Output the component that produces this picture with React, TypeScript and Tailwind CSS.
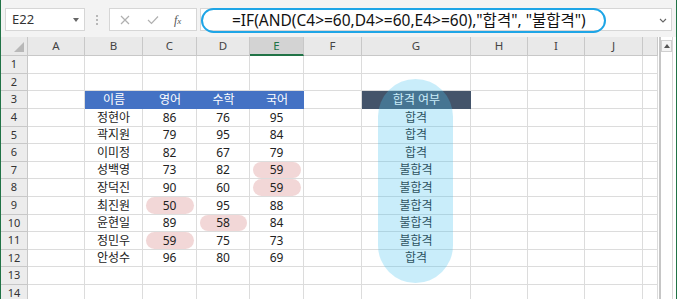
import React from "react";

const cols = [
  { k: "A", w: 57 },
  { k: "B", w: 58 },
  { k: "C", w: 54 },
  { k: "D", w: 53 },
  { k: "E", w: 54 },
  { k: "F", w: 58 },
  { k: "G", w: 109 },
  { k: "H", w: 57 },
  { k: "I", w: 57 },
  { k: "J", w: 58 },
  { k: "", w: 15 },
];

const rowHeights = [18, 17, 18, 18, 17, 18, 17, 18, 18, 17, 18, 17, 18, 18];

type Row = { name: string; c: number; d: number; e: number; pass: boolean; bad: string[] };

const scores: Row[] = [
  { name: "정현아", c: 86, d: 76, e: 95, pass: true, bad: [] },
  { name: "곽지원", c: 79, d: 95, e: 84, pass: true, bad: [] },
  { name: "이미정", c: 82, d: 67, e: 79, pass: true, bad: [] },
  { name: "성백영", c: 73, d: 82, e: 59, pass: false, bad: ["E"] },
  { name: "장덕진", c: 90, d: 60, e: 59, pass: false, bad: ["E"] },
  { name: "최진원", c: 50, d: 95, e: 88, pass: false, bad: ["C"] },
  { name: "윤현일", c: 89, d: 58, e: 84, pass: false, bad: ["D"] },
  { name: "정민우", c: 59, d: 75, e: 73, pass: false, bad: ["C"] },
  { name: "안성수", c: 96, d: 80, e: 69, pass: true, bad: [] },
];

const cellValue = (row: number, col: string) => {
  if (row === 3) {
    const head: Record<string, string> = { B: "이름", C: "영어", D: "수학", E: "국어", G: "합격 여부" };
    return head[col] ?? "";
  }
  const s = scores[row - 4];
  if (!s) return "";
  if (col === "B") return s.name;
  if (col === "C") return String(s.c);
  if (col === "D") return String(s.d);
  if (col === "E") return String(s.e);
  if (col === "G") return s.pass ? "합격" : "불합격";
  return "";
};

const Cell = ({ row, col, w }: { row: number; col: string; w: number }) => {
  const value = cellValue(row, col);
  const s = scores[row - 4];
  const bad = s ? s.bad.includes(col) : false;
  let bg = "bg-white";
  let text = "text-[#222222]";
  if (row === 3 && ["B", "C", "D", "E"].includes(col)) {
    bg = "bg-[#4472c4]";
    text = "text-white";
  }
  if (row === 3 && col === "G") {
    bg = "bg-[#44546a]";
    text = "text-white";
  }
  const colored = bg !== "bg-white";
  return (
    <div
      className={`relative flex h-full shrink-0 items-center justify-center ${bg} ${text} ${
        colored ? "" : "border-r border-b border-[#dcdcdc]"
      }`}
      style={{ width: w }}
    >
      {bad && <div className="absolute top-0 bottom-0 left-[3px] right-[2px] rounded-full bg-[#f2d7d7]" />}
      <span className="relative leading-none">{value}</span>
    </div>
  );
};

const App = () => {
  return (
    <div
      className="relative flex h-[299px] w-[677px] flex-col overflow-hidden border-l border-r border-[#217346] bg-white"
      style={{ fontFamily: '"Noto Sans", "Noto Sans CJK KR", sans-serif' }}
    >
      {/* formula bar */}
      <div className="flex h-[37px] shrink-0 items-start bg-[#f3f3f3] pt-[8px]">
        <div className="ml-[4px] flex h-[23px] w-[80px] items-center justify-between border border-[#d6d6d6] bg-white pl-[6px] pr-[5px]">
          <span className="text-[13px] text-[#333333]">E22</span>
          <span className="h-0 w-0 border-l-[3px] border-r-[3px] border-t-[4px] border-l-transparent border-r-transparent border-t-[#666666]" />
        </div>
        <div className="ml-[11px] mr-[11px] flex h-[23px] flex-col items-center justify-center gap-[2px]">
          <span className="h-[2px] w-[2px] bg-[#b8b8b8]" />
          <span className="h-[2px] w-[2px] bg-[#b8b8b8]" />
          <span className="h-[2px] w-[2px] bg-[#b8b8b8]" />
        </div>
        <div className="flex h-[23px] w-[88px] items-center border border-[#d6d6d6] bg-white text-[#a8a8a8]">
          <svg width="10" height="10" viewBox="0 0 10 10" className="ml-[10px]">
            <path d="M1 1 L9 9 M9 1 L1 9" stroke="#b0b0b0" strokeWidth="1.2" />
          </svg>
          <svg width="12" height="10" viewBox="0 0 12 10" className="ml-[17px]">
            <path d="M1 5 L4.5 8.5 L11 1.5" stroke="#b0b0b0" strokeWidth="1.2" fill="none" />
          </svg>
          <span className="ml-[15px] text-[12px] italic text-[#555555]" style={{ fontFamily: '"Liberation Serif", serif' }}>
            f<span className="text-[9px]">x</span>
          </span>
        </div>
        <div className="relative ml-[3px] flex h-[23px] w-[472px] items-center border border-[#d6d6d6] bg-white">
          <div className="absolute left-[0px] top-[-1px] flex h-[25px] w-[405px] items-center rounded-full border-2 border-[#1ea5e6] pl-[29px]">
            <span className="whitespace-nowrap text-[15.5px] leading-none text-[#111111]">
              =IF(AND(C4&gt;=60,D4&gt;=60,E4&gt;=60),"합격", "불합격")
            </span>
          </div>
          <svg width="8" height="5" viewBox="0 0 8 5" className="absolute right-[4px] top-[9px]">
            <path d="M1 1 L4 4 L7 1" stroke="#666666" strokeWidth="1.1" fill="none" />
          </svg>
        </div>
      </div>

      {/* sheet */}
      <div className="relative flex min-h-0 flex-1">
        <div className="flex w-[658px] shrink-0 flex-col">
          {/* column headers */}
          <div className="flex h-[19px] shrink-0 text-[11.5px] text-[#444444]">
            <div className="relative h-full w-[27px] shrink-0 border-r border-b border-[#c8c8c8] bg-[#e9e9e9]">
              <div className="absolute bottom-[3px] right-[3px] h-0 w-0 border-b-[10px] border-l-[10px] border-b-[#b8b8b8] border-l-transparent" />
            </div>
            {cols.map((c) => (
              <div
                key={c.k + c.w}
                className={`flex h-full shrink-0 items-center justify-center border-r ${
                  c.k === "E"
                    ? "border-b-2 border-r-[#c8c8c8] border-b-[#217346] bg-[#d3d3d3] text-[#217346]"
                    : "border-b border-[#c8c8c8] bg-[#e9e9e9]"
                }`}
                style={{ width: c.w }}
              >
                {c.k}
              </div>
            ))}
          </div>
          {/* rows */}
          {rowHeights.map((h, i) => {
            const row = i + 1;
            return (
              <div key={row} className="flex shrink-0 text-[12px]" style={{ height: h }}>
                <div className="flex h-full w-[27px] shrink-0 items-center justify-center border-r border-b border-[#c8c8c8] bg-[#ececec] text-[11px] text-[#333333]">
                  {row}
                </div>
                {cols.map((c) => (
                  <Cell key={c.k + c.w} row={row} col={c.k} w={c.w} />
                ))}
              </div>
            );
          })}
        </div>
        {/* frame + scrollbar */}
        <div className="w-[2px] shrink-0 border-l border-r border-[#c6c6c6] bg-[#e6e6e6]" />
        <div className="flex w-[12px] shrink-0 flex-col border-r border-[#d8d8d8] bg-white pt-[3px]">
          <div className="flex h-[12px] w-full items-center justify-center border border-[#cfcfcf] bg-[#f4f4f4]">
            <span className="h-0 w-0 border-b-[4px] border-l-[3px] border-r-[3px] border-b-[#555555] border-l-transparent border-r-transparent" />
          </div>
        </div>

        {/* highlight pill over the result column */}
        <div className="pointer-events-none absolute left-[377px] top-[42px] h-[204px] w-[75px] rounded-full bg-[#4cc3ef]/30" />
      </div>
    </div>
  );
};

export default App;
